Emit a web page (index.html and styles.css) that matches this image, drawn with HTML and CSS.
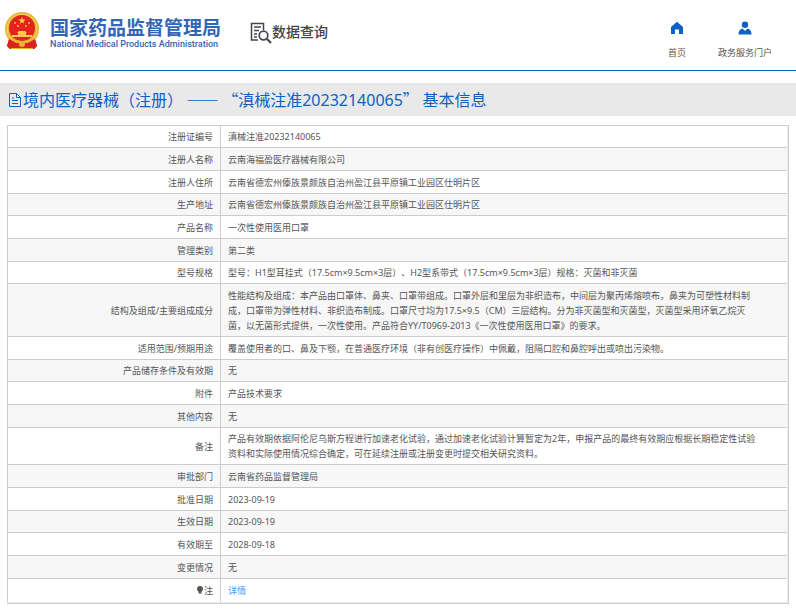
FILE: index.html
```html
<!DOCTYPE html>
<html lang="zh-CN">
<head>
<meta charset="utf-8">
<meta name="viewport" content="width=device-width, initial-scale=1">
<title>国家药品监督管理局 数据查询</title>
<link rel="stylesheet" href="styles.css">
</head>
<body>
<header class="header">
  <a class="brand" href="#">
    <svg class="emblem" viewBox="0 0 34 38" aria-hidden="true">
      <path d="M5 24h24l3 10-3 3H5l-3-3z" fill="#d9231c"/>
      <circle cx="17" cy="17" r="17" fill="#e9b533"/>
      <circle cx="17" cy="17" r="15" fill="none" stroke="#f6d565" stroke-width="1"/>
      <circle cx="17" cy="16" r="13" fill="#e3231d"/>
      <path d="M17 5l1 2.500h2.700l-2.200 1.700.8 2.600-2.300-1.600-2.300 1.600.8-2.600-2.200-1.700H16z" fill="#f8d33f"/>
      <g fill="#f5c63a"><circle cx="10" cy="11" r="1"/><circle cx="24" cy="11" r="1"/><circle cx="13" cy="14" r="1"/><circle cx="21" cy="14" r="1"/></g>
      <path d="M12 21l2-2h6l2 2zM13 21h8v2h-8zM7 23h20v2H7z" fill="#f8c957"/>
      <path d="M4 26q6 3 13 3t13-3l-4 5-6 1H14l-6-1z" fill="#e9b533"/>
      <path d="M4 27l7 4v6H5l-3-3zM30 27l-7 4v6h6l3-3z" fill="#d9231c"/>
      <path d="M11 31h12v6H11z" fill="#e3231d"/>
      <circle cx="17" cy="32" r="3" fill="#e9b533"/>
      <path d="M6 36h22v1H6z" fill="#e9b533"/>
    </svg>
    <span class="brand-text">
      <span class="brand-cn">国家药品监督管理局</span>
      <span class="brand-en">National Medical Products Administration</span>
    </span>
  </a>
  <div class="section">
    <svg class="section-icon" viewBox="0 0 22 22" fill="none" stroke="#45454f" aria-hidden="true">
      <path d="M8 18H1.500V1.500h12V8" stroke-width="1.500"/>
      <path d="M4 5h7M4 8.500h5M4 12h3M4 15h3" stroke-width="1.300"/>
      <circle cx="13.500" cy="13.500" r="4.300" stroke-width="1.700"/>
      <path d="M17 17l4 4" stroke-width="2.200"/>
    </svg>
    <span>数据查询</span>
  </div>
  <nav class="nav">
    <a href="#">
      <svg viewBox="0 0 14 14" aria-hidden="true"><path d="M7 .8L13 6v7H9V8.500H5V13H1V6z" fill="#0b62c4"/></svg>
      <span>首页</span>
    </a>
    <a href="#">
      <svg viewBox="0 0 14 14" aria-hidden="true"><circle cx="7" cy="3.700" r="3.200" fill="#0b62c4"/><path d="M.5 13.500q0-5 4-6L7 10l2.500-2.500q4 1 4 6z" fill="#0b62c4"/></svg>
      <span>政务服务门户</span>
    </a>
  </nav>
</header>
<main>
  <h1 class="title">
    <svg viewBox="0 0 14 14" fill="none" stroke="#0b62c4" aria-hidden="true"><path d="M1.500.5h7l4 4v9h-11zM8.500.5v4h4M4 5h2M4 7.500h6M4 10.500h6"/></svg>
    <span>境内医疗器械（注册） —— “滇械注准<span class="num">20232140065</span>” 基本信息</span>
  </h1>
  <div class="frame">
    <table class="info">
      <tbody>
        <tr><th scope="row">注册证编号</th><td>滇械注准20232140065</td></tr>
        <tr><th scope="row">注册人名称</th><td>云南海福盈医疗器械有限公司</td></tr>
        <tr><th scope="row">注册人住所</th><td>云南省德宏州傣族景颇族自治州盈江县平原镇工业园区仕明片区</td></tr>
        <tr><th scope="row">生产地址</th><td>云南省德宏州傣族景颇族自治州盈江县平原镇工业园区仕明片区</td></tr>
        <tr><th scope="row">产品名称</th><td>一次性使用医用口罩</td></tr>
        <tr><th scope="row">管理类别</th><td>第二类</td></tr>
        <tr><th scope="row">型号规格</th><td>型号：H1型耳挂式（17.5cm×9.5cm×3层）、H2型系带式（17.5cm×9.5cm×3层）规格：灭菌和非灭菌</td></tr>
        <tr class="long"><th scope="row">结构及组成/主要组成成分</th><td>性能结构及组成：本产品由口罩体、鼻夹、口罩带组成。口罩外层和里层为非织造布，中间层为聚丙烯熔喷布，鼻夹为可塑性材料制<br>成，口罩带为弹性材料、非织造布制成。口罩尺寸均为17.5×9.5（CM）三层结构。分为非灭菌型和灭菌型，灭菌型采用环氧乙烷灭<br>菌，以无菌形式提供，一次性使用。产品符合YY/T0969-2013《一次性使用医用口罩》的要求。</td></tr>
        <tr><th scope="row">适用范围/预期用途</th><td>覆盖使用者的口、鼻及下颚，在普通医疗环境（非有创医疗操作）中佩戴，阻隔口腔和鼻腔呼出或喷出污染物。</td></tr>
        <tr><th scope="row">产品储存条件及有效期</th><td>无</td></tr>
        <tr><th scope="row">附件</th><td>产品技术要求</td></tr>
        <tr><th scope="row">其他内容</th><td>无</td></tr>
        <tr><th scope="row">备注</th><td>产品有效期依据阿伦尼乌斯方程进行加速老化试验，通过加速老化试验计算暂定为2年，申报产品的最终有效期应根据长期稳定性试验<br>资料和实际使用情况综合确定，可在延续注册或注册变更时提交相关研究资料。</td></tr>
        <tr><th scope="row">审批部门</th><td>云南省药品监督管理局</td></tr>
        <tr><th scope="row">批准日期</th><td>2023-09-19</td></tr>
        <tr><th scope="row">生效日期</th><td>2023-09-19</td></tr>
        <tr><th scope="row">有效期至</th><td>2028-09-18</td></tr>
        <tr><th scope="row">变更情况</th><td>无</td></tr>
        <tr class="last"><th scope="row"><svg class="bulb" viewBox="0 0 8 8" aria-hidden="true"><path d="M4 0a3 3 0 0 1 3 3q0 1.500-1.500 2.500v2h-3v-2Q1 4.500 1 3a3 3 0 0 1 3-3z" fill="#555"/></svg>注</th><td><a href="#">详情</a></td></tr>
      </tbody>
    </table>
  </div>
</main>
</body>
</html>
```
FILE: styles.css
```css
* { box-sizing: border-box; }

body {
  margin: 0;
  background: #fff;
  color: #555;
  font: 9px/15px "Noto Sans", "Noto Sans CJK SC", sans-serif;
  text-spacing-trim: space-all;
}

a { text-decoration: none; }

.header {
  display: flex;
  align-items: flex-start;
  height: 71px;
  padding: 12px 24px 0 5px;
  border-bottom: 1px solid #0b62c4;
}

.brand {
  display: flex;
  gap: 11px;
  color: #3465b4;
}

.emblem {
  width: 34px;
  height: 38px;
}

.brand-text {
  display: flex;
  flex-direction: column;
  padding-top: 3px;
  white-space: nowrap;
}

.brand-cn {
  font: bold 19px/23px "Noto Sans CJK SC", sans-serif;
}

.brand-en {
  font: 500 9px/13px Roboto, sans-serif;
}

.section {
  display: flex;
  align-items: flex-start;
  margin-left: 29px;
  padding-top: 9px;
  color: #444;
  font: 500 14px/20px "Noto Sans CJK SC", sans-serif;
}

.section-icon {
  width: 22px;
  height: 24px;
}

.nav {
  display: flex;
  gap: 32px;
  margin-left: auto;
  padding-top: 9px;
}

.nav a {
  display: flex;
  flex-direction: column;
  align-items: center;
  gap: 10px;
  color: #555;
}

.nav svg {
  width: 14px;
  height: 14px;
}

.title {
  display: flex;
  align-items: center;
  gap: 1px;
  margin: 12px 0 9px;
  padding: 4px 8px;
  background: #e9e9e9;
  color: #0b62c4;
  font: 16px/24px "Noto Sans CJK SC", sans-serif;
}

.title svg {
  width: 14px;
  height: 14px;
}

.num { font-family: "Noto Sans", sans-serif; }

.frame {
  margin: 0 7px;
  padding: 0 1px 1px 0;
  border: 1px solid #ccc;
  border-width: 0 1px 1px 0;
  background: #ebeef5;
}

.info {
  width: 100%;
  border-spacing: 0;
  background: #fff;
}

.info tr { height: 23px; }
.info tr:nth-child(3n+1) { height: 22px; }
.info tr:nth-child(even) { background: #f7f7f7; }
.info tr.long { height: 53px; }
.info tr.last { height: 24px; }

.info th,
.info td {
  padding: 3px 7px;
  border: 1px solid #ccc;
  border-width: 1px 0 0 1px;
  font-weight: normal;
  text-align: left;
}

.info th {
  width: 213px;
  text-align: right;
}

.info a { color: #409eff; }

.bulb {
  width: 8px;
  height: 8px;
}
```
